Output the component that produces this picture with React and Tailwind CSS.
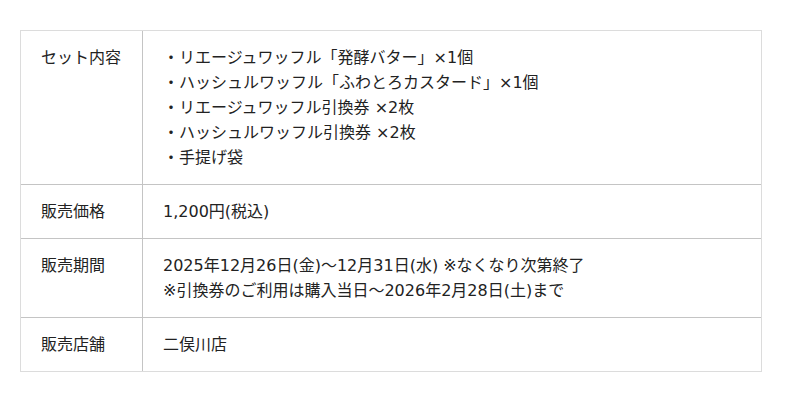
const rows = [
  {
    label: 'セット内容',
    lines: [
      '・リエージュワッフル「発酵バター」×1個',
      '・ハッシュルワッフル「ふわとろカスタード」×1個',
      '・リエージュワッフル引換券 ×2枚',
      '・ハッシュルワッフル引換券 ×2枚',
      '・手提げ袋',
    ],
  },
  { label: '販売価格', lines: ['1,200円(税込)'] },
  {
    label: '販売期間',
    lines: [
      '2025年12月26日(金)〜12月31日(水) ※なくなり次第終了',
      '※引換券のご利用は購入当日〜2026年2月28日(土)まで',
    ],
  },
  { label: '販売店舗', lines: ['二俣川店'] },
]

export default function App() {
  return (
    <div
      className="w-[800px] h-[402px] bg-white pt-[30px] pl-5 text-[16px] leading-[25px] text-[#222]"
      style={{ fontFamily: '"DejaVu Sans", "Noto Sans CJK JP", sans-serif' }}
    >
      <div className="w-[742px] border border-[#dcdcdc]">
        {rows.map((row, i) => (
          <div
            key={row.label}
            className={`flex ${i < rows.length - 1 ? 'border-b border-[#c4c4c4]' : ''}`}
          >
            <div className="w-[122px] shrink-0 border-r border-[#c4c4c4] pl-5 py-[14px]">
              {row.label}
            </div>
            <div className="flex-1 pl-5 py-[14px]">
              {row.lines.map((line) => (
                <div key={line}>{line}</div>
              ))}
            </div>
          </div>
        ))}
      </div>
    </div>
  )
}
